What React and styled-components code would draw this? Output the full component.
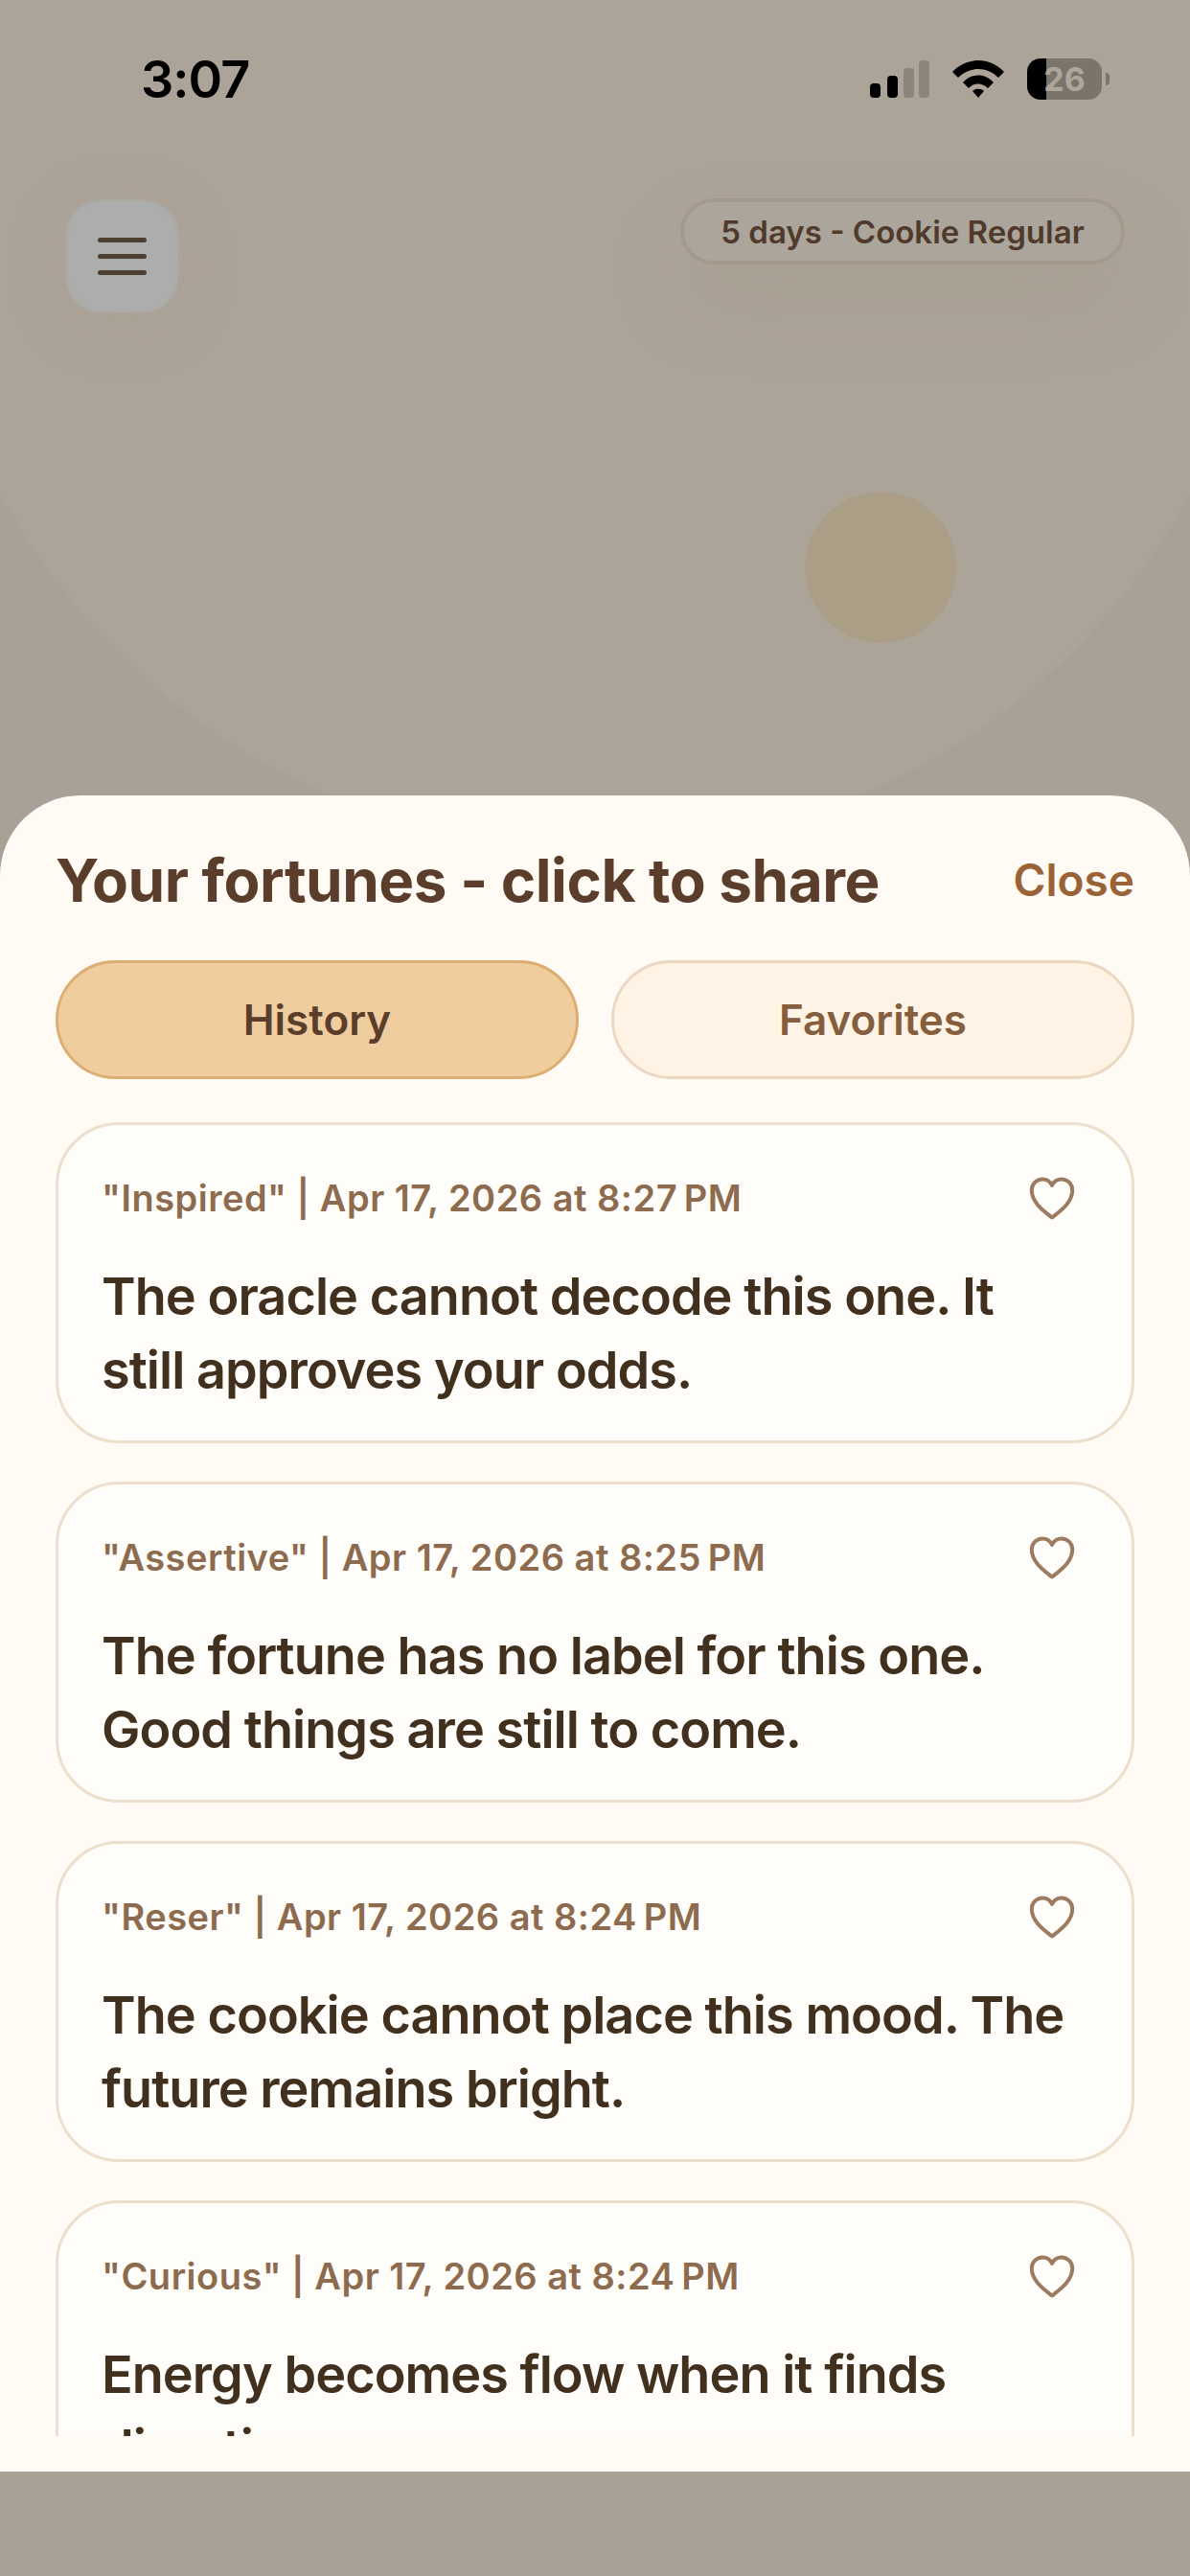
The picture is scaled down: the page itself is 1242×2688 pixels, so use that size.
import React from 'react'
import styled, { createGlobalStyle } from 'styled-components'

const fortunes = [
  { mood: 'Inspired', time: '8:27', text: 'The oracle cannot decode this one. It still approves your odds.' },
  { mood: 'Assertive', time: '8:25', text: 'The fortune has no label for this one. Good things are still to come.' },
  { mood: 'Reser', time: '8:24', text: 'The cookie cannot place this mood. The future remains bright.' },
  { mood: 'Curious', time: '8:24', text: 'Energy becomes flow when it finds direction.' },
]

const Global = createGlobalStyle`
  html, body {
    margin: 0;
    padding: 0;
    background: #a9a195;
  }
  * {
    box-sizing: border-box;
  }
`
const Screen = styled.div`
  position: relative;
  width: 1242px;
  height: 2688px;
  overflow: hidden;
  background: #a9a195;
  font-family: Inter, 'Liberation Sans', sans-serif;
`
const Glow = styled.div`
  position: absolute;
  left: -83px;
  top: -521px;
  width: 1408px;
  height: 1408px;
  border-radius: 50%;
  background: #ada499;
`
const Sun = styled.div`
  position: absolute;
  left: 840px;
  top: 513px;
  width: 158px;
  height: 158px;
  border-radius: 50%;
  background: #aa9e86;
`
const Content = styled.div`
  position: relative;
  display: flex;
  flex-direction: column;
  height: 100%;
`
const StatusBar = styled.div`
  display: flex;
  align-items: center;
  justify-content: space-between;
  height: 58px;
  margin-top: 53px;
  padding: 0 84px 0 147px;
`
const Time = styled.div`
  font-size: 54px;
  font-weight: 600;
  letter-spacing: -1px;
  color: #000;
`
const StatusIcons = styled.div`
  display: flex;
  align-items: center;
  gap: 24px;
`
const Battery = styled.div`
  position: relative;
  display: flex;
  align-items: center;
  justify-content: center;
  width: 78px;
  height: 43px;
  border-radius: 14px;
  overflow: hidden;
  background: linear-gradient(90deg, #000 0 26%, #7a746b 26% 100%);
  font-size: 34px;
  font-weight: 700;
  color: #aea69b;
`
const BatteryWrap = styled.div`
  display: flex;
  align-items: center;
  gap: 4px;
`
const BatteryNub = styled.div`
  width: 4px;
  height: 13px;
  border-radius: 0 4px 4px 0;
  background: #7a746b;
`
const TopBar = styled.div`
  display: flex;
  align-items: flex-start;
  justify-content: space-between;
  margin-top: 98px;
  padding: 0 68px 0 69px;
`
const MenuButton = styled.div`
  display: flex;
  flex-direction: column;
  align-items: center;
  justify-content: center;
  gap: 12px;
  width: 117px;
  height: 117px;
  border-radius: 36px;
  background: #adadad;
  border: 3px solid #ababa8;
  box-shadow: 0 12px 60px rgba(160, 150, 138, 0.22);
`
const MenuLine = styled.span`
  width: 51px;
  height: 5px;
  border-radius: 3px;
  background: #4d3f31;
`
const StreakPill = styled.div`
  display: flex;
  align-items: center;
  justify-content: center;
  width: 464px;
  height: 69px;
  margin-top: -2px;
  border-radius: 35px;
  background: #aca59c;
  border: 4px solid #a3998d;
  font-size: 33px;
  font-weight: 600;
  color: #4f3a2b;
  box-shadow: 0 40px 80px rgba(150, 140, 125, 0.2);
`
const Sheet = styled.div`
  display: flex;
  flex-direction: column;
  height: 1749px;
  margin-top: 504px;
  padding: 0 58px;
  border-radius: 84px 84px 0 0;
  background: #fffaf3;
`
const SheetHeader = styled.div`
  display: flex;
  align-items: center;
  justify-content: space-between;
  height: 172px;
  padding-top: 4px;
`
const Title = styled.div`
  font-size: 62px;
  font-weight: 700;
  color: #5a3e2b;
  letter-spacing: -0.5px;
`
const Close = styled.div`
  font-size: 46px;
  font-weight: 600;
  color: #996337;
`
const Tabs = styled.div`
  display: grid;
  grid-template-columns: 1fr 1fr;
  gap: 34px;
`
const Tab = styled.div`
  display: flex;
  align-items: center;
  justify-content: center;
  height: 124px;
  border-radius: 62px;
  font-size: 44px;
  font-weight: 600;
  border: 3px solid ${(p) => (p.$active ? '#dcae72' : '#ebd8c1')};
  background: ${(p) => (p.$active ? '#efcd9f' : '#fef3e4')};
  color: ${(p) => (p.$active ? '#5a3e2b' : '#855e3d')};
`
const List = styled.div`
  display: flex;
  flex-direction: column;
  gap: 40px;
  height: 1371px;
  margin-top: 45px;
  overflow: hidden;
`
const Card = styled.div`
  flex: none;
  height: 335px;
  padding: 48px 45px 0;
  border: 3px solid #ecdfcd;
  border-radius: 66px;
  background: #fffdf9;
`
const CardTop = styled.div`
  display: flex;
  align-items: center;
  justify-content: space-between;
  height: 56px;
`
const Meta = styled.div`
  font-size: 38px;
  font-weight: 600;
  letter-spacing: 0.5px;
  color: #8d6b4f;
`
const Heart = styled.svg`
  width: 56px;
  height: 56px;
  margin-right: 10px;
  fill: none;
  stroke: #9c7b60;
  stroke-width: 1.7;
  stroke-linejoin: round;
`
const Body = styled.div`
  margin-top: 36px;
  padding-right: 14px;
  font-size: 54px;
  font-weight: 600;
  line-height: 77px;
  letter-spacing: -0.95px;
  color: #42301f;
`

const Signal = () => (
  <svg width="62" height="39" viewBox="0 0 62 39">
    <rect x="0" y="24" width="11" height="15" rx="4" fill="#000" />
    <rect x="18" y="16" width="11" height="23" rx="4" fill="#000" />
    <rect x="35" y="8" width="11" height="31" rx="4" fill="#8c857c" />
    <rect x="51" y="0" width="11" height="39" rx="4" fill="#8c857c" />
  </svg>
)

const Wifi = () => (
  <svg width="54" height="40" viewBox="0 0 54 40">
    <path d="M0 13 C15 -3 39 -3 54 13 L48 19 C36 7 18 7 6 19 Z" fill="#000" />
    <path d="M11 24 C20 14 34 14 43 24 L37 30 C31 24 23 24 17 30 Z" fill="#000" />
    <path d="M21 33 C24 30 30 30 33 33 L27 40 Z" fill="#000" />
  </svg>
)

const HeartIcon = () => (
  <Heart viewBox="0 0 24 24">
    <path d="M12 20.8 C8 17.6 2.9 14 2.9 8.6 C2.9 5.6 5.2 3.6 7.7 3.6 C9.6 3.6 11.2 4.6 12 6.4 C12.8 4.6 14.4 3.6 16.3 3.6 C18.8 3.6 21.1 5.6 21.1 8.6 C21.1 14 16 17.6 12 20.8 Z" />
  </Heart>
)

export default function App() {
  return (
    <Screen>
      <Global />
      <Glow />
      <Sun />
      <Content>
        <StatusBar>
          <Time>3:07</Time>
          <StatusIcons>
            <Signal />
            <Wifi />
            <BatteryWrap>
              <Battery>26</Battery>
              <BatteryNub />
            </BatteryWrap>
          </StatusIcons>
        </StatusBar>
        <TopBar>
          <MenuButton>
            <MenuLine />
            <MenuLine />
            <MenuLine />
          </MenuButton>
          <StreakPill>5 days - Cookie Regular</StreakPill>
        </TopBar>
        <Sheet>
          <SheetHeader>
            <Title>Your fortunes - click to share</Title>
            <Close>Close</Close>
          </SheetHeader>
          <Tabs>
            <Tab $active>History</Tab>
            <Tab>Favorites</Tab>
          </Tabs>
          <List>
            {fortunes.map((f) => (
              <Card key={f.mood}>
                <CardTop>
                  <Meta>
                    "{f.mood}" | Apr 17, 2026 at {f.time}{'\u202f'}PM
                  </Meta>
                  <HeartIcon />
                </CardTop>
                <Body>{f.text}</Body>
              </Card>
            ))}
          </List>
        </Sheet>
      </Content>
    </Screen>
  )
}
